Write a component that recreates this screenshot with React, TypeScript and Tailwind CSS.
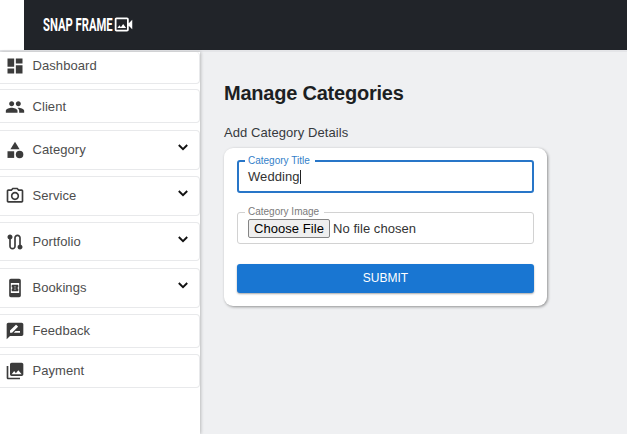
import type { IconType } from "react-icons";
import {
  MdDashboard,
  MdPeople,
  MdCategory,
  MdOutlineCameraAlt,
  MdRoute,
  MdBookOnline,
  MdRateReview,
  MdPhotoLibrary,
  MdOutlineVideoCameraBack,
} from "react-icons/md";

type Item = { label: string; icon: IconType; box: string; expandable?: boolean };

const items: Item[] = [
  { label: "Dashboard", icon: MdDashboard, box: "h-[32px] mb-[5px] pb-[3px] border-t-0" },
  { label: "Client", icon: MdPeople, box: "h-[34px] mb-[7px] pt-px" },
  { label: "Category", icon: MdCategory, box: "h-[40px] mb-[6px] pb-px", expandable: true },
  { label: "Service", icon: MdOutlineCameraAlt, box: "h-[40px] mb-[6px] pb-px", expandable: true },
  { label: "Portfolio", icon: MdRoute, box: "h-[39px] mb-[7px]", expandable: true },
  { label: "Bookings", icon: MdBookOnline, box: "h-[40px] mb-[6px] pb-px", expandable: true },
  { label: "Feedback", icon: MdRateReview, box: "h-[34px] mb-[6px]" },
  { label: "Payment", icon: MdPhotoLibrary, box: "h-[34px]" },
];

function Chevron() {
  return (
    <svg viewBox="0 0 10 7" className="mb-[5px] h-[7px] w-[10px]" fill="none" stroke="#111" strokeWidth="1.9">
      <path d="M0.8 1 5 5.2 9.2 1" />
    </svg>
  );
}

function Header() {
  return (
    <header className="flex h-[52px] shrink-0 border-b-2 border-[#e4e5e8] bg-white pl-[24px]">
      <div className="flex flex-1 items-center bg-[#212429] pb-[2px] pl-[19px]">
        <div className="h-[20px] w-[70px]">
          <span className="inline-block origin-left scale-x-[0.625] whitespace-nowrap font-[Roboto,sans-serif] text-[18px] leading-[20px] font-bold text-white">
            SNAP FRAME
          </span>
        </div>
        <MdOutlineVideoCameraBack className="size-[21px] text-white" />
      </div>
    </header>
  );
}

function Sidebar() {
  return (
    <nav className="w-[200px] shrink-0 bg-white shadow-[1px_0_3px_rgba(0,0,0,0.22)]">
      {items.map(({ label, icon: Icon, box, expandable }) => (
        <div
          key={label}
          className={`flex items-center rounded-r-[4px] border border-l-0 border-[#e8e9eb] pr-[11px] pl-[5px] ${box}`}
        >
          <Icon className="size-[20px] text-[#3b3b3b]" />
          <span className="ml-[7.5px] flex-1 text-[13px] leading-[18px] tracking-[0.07px] text-[#4d4d4d]">{label}</span>
          {expandable && <Chevron />}
        </div>
      ))}
    </nav>
  );
}

export default function App() {
  return (
    <div className="flex h-[434px] w-[627px] flex-col overflow-hidden bg-[#eff0f2] font-['Liberation_Sans',Arial,sans-serif]">
      <Header />
      <div className="flex min-h-0 flex-1">
        <Sidebar />
        <main className="flex-1 pt-[29px] pl-[24px]">
          <h1 className="text-[20px] leading-[24px] font-bold tracking-[-0.22px] text-[#1c1f23]">Manage Categories</h1>
          <h2 className="mt-[19px] text-[13px] leading-[18px] tracking-[0.07px] text-[#36393d]">Add Category Details</h2>
          <form className="mt-[6px] h-[158px] w-[323px] rounded-[9px] bg-white px-[13px] pt-[7px] shadow-[1px_1px_3px_rgba(0,0,0,0.4)]">
            <fieldset className="h-[38px] rounded-[3px] border-2 border-[#2876c8] px-[6px]">
              <legend className="px-[3px] pr-[5px] text-[10px] leading-[11px] text-[#347fc9]">Category Title</legend>
              <div className="flex items-center px-[3px] pt-px text-[13px] leading-[20px] tracking-[0.07px] text-[#333]">
                Wedding
                <span className="h-[14px] w-px bg-[#222]" />
              </div>
            </fieldset>
            <fieldset className="mt-[14px] h-[37px] rounded-[3px] border border-[#d2d2d2] px-[7px]">
              <legend className="px-[3px] pr-[5px] text-[10px] leading-[10px] text-[#7b7b7b]">Category Image</legend>
              <div className="flex items-center px-[3px] pt-[2px] text-[13px] tracking-[0.05px] text-[#333]">
                <button type="button" className="h-[19px] w-[82px] rounded-[2px] border border-[#858585] bg-[#efefef] text-[13px] leading-[17px] text-black">
                  Choose File
                </button>
                <span className="ml-[3px]">No file chosen</span>
              </div>
            </fieldset>
            <button
              type="button"
              className="mt-[20px] block h-[29px] w-full rounded-[3px] bg-[#1976d2] text-[12px] leading-[29px] text-white shadow-[0_1px_2px_rgba(0,0,0,0.35)]"
            >
              SUBMIT
            </button>
          </form>
        </main>
      </div>
    </div>
  );
}
